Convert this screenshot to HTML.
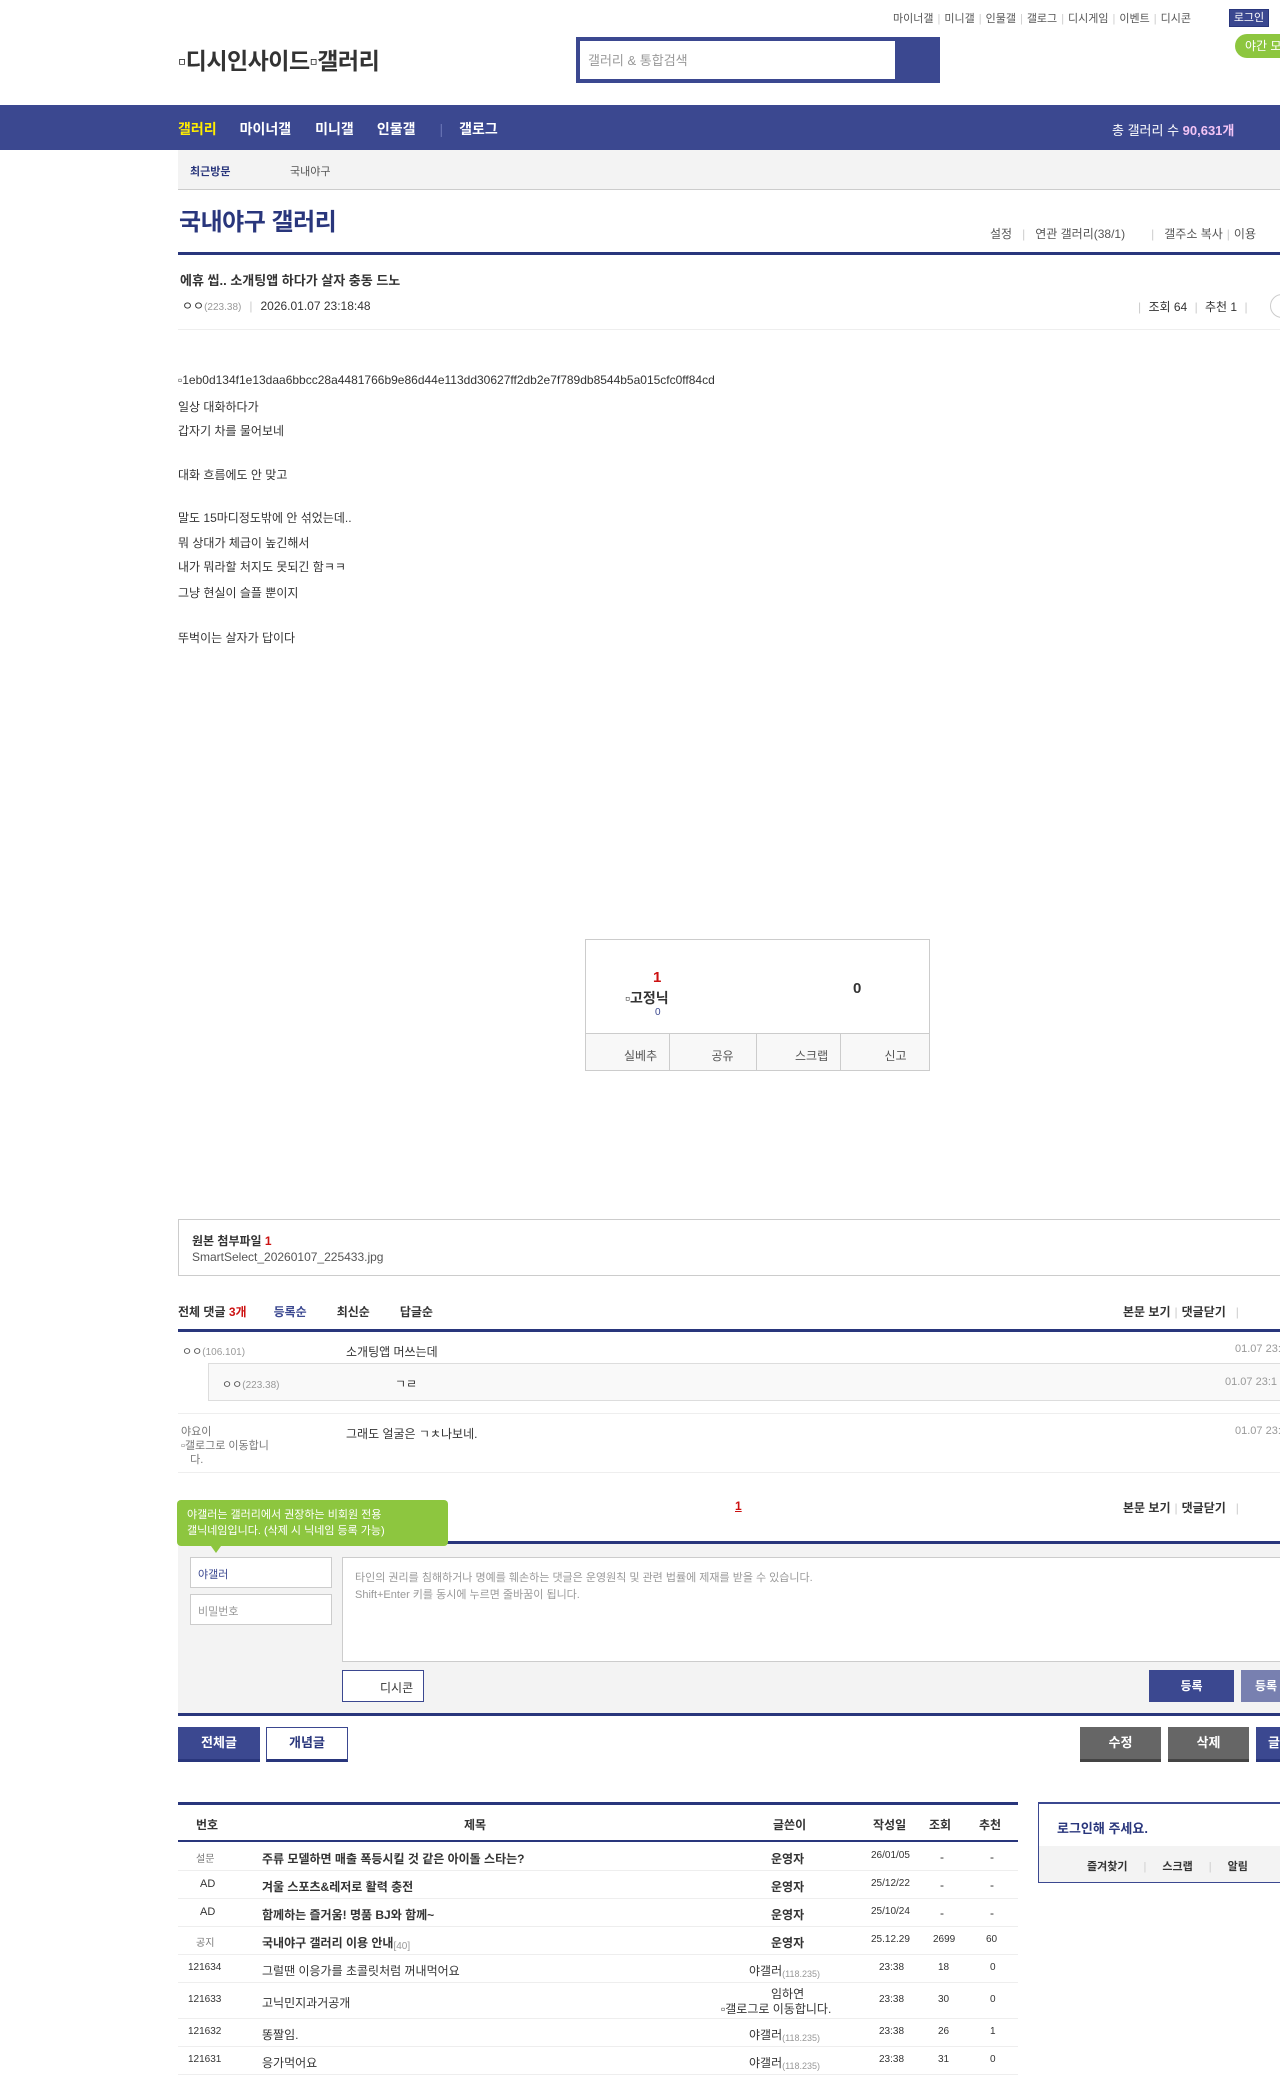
<!DOCTYPE html>
<html><head><meta charset="utf-8"><style>
*{margin:0;padding:0;box-sizing:border-box}
body{width:1280px;height:2079px;position:relative;overflow:hidden;background:#fff;font-family:"Liberation Sans","Noto Sans CJK KR",sans-serif;font-size:12px;color:#333}
.a{position:absolute;white-space:nowrap}
.b{font-weight:bold}
.sep{color:#ccc;margin:0 4px}
.hl{position:absolute;height:1px;background:#eee}
.bl{position:absolute;height:3px;background:#29367c}
.tr{position:absolute;left:178px;width:840px;height:28px;border-bottom:1px solid #eee;font-size:12px}
.tr span{position:absolute;top:7px;white-space:nowrap}
.c{position:absolute;left:178px;font-size:12px;color:#333;white-space:nowrap}
</style></head><body>
<!-- top links -->
<div class="a" style="left:893px;top:10px;font-size:11px;color:#555">마이너갤<span class="sep">|</span>미니갤<span class="sep">|</span>인물갤<span class="sep">|</span>갤로그<span class="sep">|</span>디시게임<span class="sep">|</span>이벤트<span class="sep">|</span>디시콘</div>
<div class="a" style="left:1229px;top:9px;width:40px;height:18px;background:#3b4890;border:1px solid #29367c;color:#fff;font-size:11px;text-align:center;line-height:16px">로그인</div>
<div class="a" style="left:1235px;top:34px;width:60px;height:24px;background:#8dc63f;border-radius:12px;color:#fff;font-size:12px;line-height:24px;padding-left:10px">야간 모드</div>
<!-- logo -->
<div class="a" style="left:178px;top:42px;font-size:23px;font-weight:bold;color:#333;letter-spacing:-0.5px">▫디시인사이드▫갤러리</div>
<!-- search -->
<div class="a" style="left:576px;top:37px;width:364px;height:46px;background:#3b4890"></div>
<div class="a" style="left:580px;top:41px;width:315px;height:38px;background:#fff;color:#999;font-size:13px;padding:9px 8px">갤러리 &amp; 통합검색</div>
<!-- nav -->
<div class="a" style="left:0;top:105px;width:1280px;height:45px;background:#3b4890"></div>
<div class="a b" style="left:178px;top:119px;font-size:14px;color:#fff"><span style="color:#ffed00">갤러리</span><span style="margin-left:23px">마이너갤</span><span style="margin-left:24px">미니갤</span><span style="margin-left:23px">인물갤</span><span style="color:#6a75b5;margin:0 16px 0 24px;font-weight:normal">|</span>갤로그</div>
<div class="a" style="left:1112px;top:120px;font-size:13px;color:#fff">총 갤러리 수 <b style="color:#f3c4f5">90,631개</b></div>
<!-- sub bar -->
<div class="a" style="left:178px;top:150px;width:1102px;height:40px;background:#f3f3f3;border-bottom:1px solid #ccc"></div>
<div class="a b" style="left:190px;top:163px;font-size:11px;color:#29367c">최근방문</div>
<div class="a" style="left:290px;top:163px;font-size:11px;color:#555">국내야구</div>
<!-- title -->
<div class="a b" style="left:179px;top:202px;font-size:24px;color:#29367c;letter-spacing:-0.5px">국내야구 갤러리</div>
<div class="a" style="left:990px;top:225px;font-size:12px;color:#555">설정<span class="sep" style="margin:0 10px">|</span>연관 갤러리(38/1)<span class="sep" style="margin:0 10px 0 26px">|</span>갤주소 복사<span class="sep">|</span>이용</div>
<div class="bl" style="left:178px;top:252px;width:1102px;height:3px"></div>
<!-- post head -->
<div class="a b" style="left:180px;top:270px;font-size:13px;color:#333">에휴 씹.. 소개팅앱 하다가 살자 충동 드노</div>
<div class="a" style="left:182px;top:297px;font-size:12px;color:#333">ㅇㅇ<span style="color:#999;font-size:10px">(223.38)</span><span class="sep" style="margin:0 8px">|</span>2026.01.07 23:18:48</div>
<div class="a" style="left:1134px;top:298px;font-size:12px;color:#333"><span class="sep">|</span> 조회 64 <span class="sep">|</span> 추천 1 <span class="sep">|</span></div>
<div class="a" style="left:1270px;top:294px;width:24px;height:24px;border:1px solid #ccc;border-radius:12px"></div>
<div class="hl" style="left:178px;top:329px;width:1102px"></div>
<!-- content -->
<div class="c" style="top:373px">▫1eb0d134f1e13daa6bbcc28a4481766b9e86d44e113dd30627ff2db2e7f789db8544b5a015cfc0ff84cd</div>
<div class="c" style="top:398px">일상 대화하다가</div>
<div class="c" style="top:422px">갑자기 차를 물어보네</div>
<div class="c" style="top:466px">대화 흐름에도 안 맞고</div>
<div class="c" style="top:509px">말도 15마디정도밖에 안 섞었는데..</div>
<div class="c" style="top:534px">뭐 상대가 체급이 높긴해서</div>
<div class="c" style="top:558px">내가 뭐라할 처지도 못되긴 함ㅋㅋ</div>
<div class="c" style="top:584px">그냥 현실이 슬플 뿐이지</div>
<div class="c" style="top:629px">뚜벅이는 살자가 답이다</div>
<!-- recommend box -->
<div class="a" style="left:585px;top:939px;width:345px;height:132px;border:1px solid #ccc"></div>
<div class="a b" style="left:653px;top:969px;font-size:15px;color:#c11">1</div>
<div class="a b" style="left:625px;top:988px;font-size:14px;color:#333">▫고정닉</div>
<div class="a" style="left:655px;top:1007px;font-size:10px;color:#3b4890">0</div>
<div class="a b" style="left:853px;top:980px;font-size:15px;color:#333">0</div>
<div class="a" style="left:586px;top:1033px;width:343px;height:37px;background:#f8f8f8;border-top:1px solid #ccc;display:flex;font-size:12px;color:#555">
<div style="flex:1;border-right:1px solid #ccc;padding:13px 0 0 38px">실베추</div><div style="flex:1;border-right:1px solid #ccc;padding:13px 0 0 42px">공유</div><div style="flex:1;border-right:1px solid #ccc;padding:13px 0 0 38px">스크랩</div><div style="flex:1;padding:13px 0 0 44px">신고</div></div>
<!-- attach -->
<div class="a" style="left:178px;top:1219px;width:1110px;height:57px;border:1px solid #ccc"></div>
<div class="a b" style="left:192px;top:1232px;font-size:12px;color:#333">원본 첨부파일 <span style="color:#c11">1</span></div>
<div class="a" style="left:192px;top:1250px;font-size:12px;color:#555">SmartSelect_20260107_225433.jpg</div>
<!-- comments -->
<div class="a b" style="left:178px;top:1303px;font-size:12px;color:#333">전체 댓글 <span style="color:#c11">3개</span><span style="color:#3b4890;margin-left:27px">등록순</span><span style="margin-left:30px">최신순</span><span style="margin-left:30px">답글순</span></div>
<div class="a b" style="left:1123px;top:1303px;font-size:12px;color:#333">본문 보기<span class="sep" style="font-weight:normal">|</span>댓글닫기<span class="sep" style="font-weight:normal;margin-left:10px">|</span></div>
<div class="bl" style="left:178px;top:1329px;width:1102px"></div>
<div class="a" style="left:182px;top:1343px;font-size:11px;color:#555">ㅇㅇ<span style="color:#999;font-size:10px">(106.101)</span></div>
<div class="a" style="left:346px;top:1343px;font-size:12px;color:#333">소개팅앱 머쓰는데</div>
<div class="a" style="left:1235px;top:1343px;font-size:11px;color:#999">01.07 23:</div>
<div class="a" style="left:208px;top:1363px;width:1080px;height:38px;background:#f9f9f9;border:1px solid #ddd"></div>
<div class="a" style="left:222px;top:1376px;font-size:11px;color:#555">ㅇㅇ<span style="color:#999;font-size:10px">(223.38)</span></div>
<div class="a" style="left:395px;top:1375px;font-size:12px;color:#333">ㄱㄹ</div>
<div class="a" style="left:1225px;top:1376px;font-size:11px;color:#999">01.07 23:1</div>
<div class="hl" style="left:178px;top:1413px;width:1102px"></div>
<div class="a" style="left:181px;top:1425px;font-size:11px;color:#777;line-height:14px">야요이<br>▫갤로그로 이동합니<br>&nbsp;&nbsp;&nbsp;다.</div>
<div class="a" style="left:346px;top:1425px;font-size:12px;color:#333">그래도 얼굴은 ㄱㅊ나보네.</div>
<div class="a" style="left:1235px;top:1425px;font-size:11px;color:#999">01.07 23:</div>
<div class="hl" style="left:178px;top:1472px;width:1102px"></div>
<div class="a b" style="left:735px;top:1499px;font-size:12px;color:#c11;text-decoration:underline">1</div>
<div class="a b" style="left:1123px;top:1499px;font-size:12px;color:#333">본문 보기<span class="sep" style="font-weight:normal">|</span>댓글닫기<span class="sep" style="font-weight:normal;margin-left:10px">|</span></div>
<div class="bl" style="left:178px;top:1541px;width:1102px"></div>
<div class="a" style="left:178px;top:1544px;width:1102px;height:170px;background:#f3f3f3"></div>
<div class="a" style="left:177px;top:1500px;width:271px;height:46px;background:#8dc63f;border-radius:4px;color:#fff;font-size:11px;line-height:16px;padding:7px 10px">야갤러는 갤러리에서 권장하는 비회원 전용<br>갤닉네임입니다. (삭제 시 닉네임 등록 가능)</div>
<div class="a" style="left:211px;top:1546px;width:0;height:0;border-left:5px solid transparent;border-right:5px solid transparent;border-top:7px solid #8dc63f"></div>
<div class="a" style="left:190px;top:1557px;width:142px;height:31px;background:#fff;border:1px solid #ccc;font-size:11px;color:#3b4890;padding:8px 7px">야갤러</div>
<div class="a" style="left:190px;top:1594px;width:142px;height:31px;background:#fff;border:1px solid #ccc;font-size:11px;color:#999;padding:8px 7px">비밀번호</div>
<div class="a" style="left:342px;top:1557px;width:950px;height:105px;background:#fff;border:1px solid #ccc;font-size:11px;color:#999;padding:12px 12px;line-height:17px">타인의 권리를 침해하거나 명예를 훼손하는 댓글은 운영원칙 및 관련 법률에 제재를 받을 수 있습니다.<br>Shift+Enter 키를 동시에 누르면 줄바꿈이 됩니다.</div>
<div class="a" style="left:342px;top:1670px;width:82px;height:32px;background:#fff;border:1px solid #3b4890;font-size:12px;color:#333;padding:8px 0 0 37px">디시콘</div>
<div class="a b" style="left:1149px;top:1670px;width:85px;height:32px;background:#3b4890;color:#fff;font-size:12px;text-align:center;line-height:32px">등록</div>
<div class="a b" style="left:1241px;top:1670px;width:60px;height:32px;background:#7880b0;color:#fff;font-size:12px;line-height:32px;padding-left:14px">등록</div>
<div class="bl" style="left:178px;top:1713px;width:1102px"></div>
<!-- buttons -->
<div class="a b" style="left:178px;top:1727px;width:82px;height:35px;background:#3b4890;border-bottom:3px solid #29367c;color:#fff;font-size:13px;text-align:center;line-height:32px">전체글</div>
<div class="a b" style="left:266px;top:1727px;width:82px;height:35px;background:#fff;border:1px solid #3b4890;border-bottom:3px solid #29367c;color:#29367c;font-size:13px;text-align:center;line-height:30px">개념글</div>
<div class="a b" style="left:1080px;top:1727px;width:81px;height:35px;background:#666;border-bottom:3px solid #444;color:#fff;font-size:13px;text-align:center;line-height:32px">수정</div>
<div class="a b" style="left:1168px;top:1727px;width:81px;height:35px;background:#666;border-bottom:3px solid #444;color:#fff;font-size:13px;text-align:center;line-height:32px">삭제</div>
<div class="a b" style="left:1256px;top:1727px;width:40px;height:35px;background:#3b4890;border-bottom:3px solid #29367c;color:#fff;font-size:13px;line-height:32px;padding-left:12px">글</div>
<!-- list -->
<div class="bl" style="left:178px;top:1802px;width:840px"></div>
<div class="a b" style="top:1816px;left:196px;font-size:12px;color:#333">번호</div>
<div class="a b" style="top:1816px;left:464px;font-size:12px;color:#333">제목</div>
<div class="a b" style="top:1816px;left:773px;font-size:12px;color:#333">글쓴이</div>
<div class="a b" style="top:1816px;left:873px;font-size:12px;color:#333">작성일</div>
<div class="a b" style="top:1816px;left:929px;font-size:12px;color:#333">조회</div>
<div class="a b" style="top:1816px;left:979px;font-size:12px;color:#333">추천</div>
<div class="a" style="left:178px;top:1840px;width:840px;height:2px;background:#29367c"></div>
<div class="tr" style="top:1843px"><span style="left:18px;color:#777;font-size:10px">설문</span><span class="b" style="left:84px">주류 모델하면 매출 폭등시킬 것 같은 아이돌 스타는?</span><span class="b" style="left:593px">운영자</span><span style="left:693px;font-size:10px">26/01/05</span><span style="left:762px">-</span><span style="left:812px">-</span></div>
<div class="tr" style="top:1871px"><span style="left:22px;font-size:11px">AD</span><span class="b" style="left:84px">겨울 스포츠&amp;레저로 활력 충전</span><span class="b" style="left:593px">운영자</span><span style="left:693px;font-size:10px">25/12/22</span><span style="left:762px">-</span><span style="left:812px">-</span></div>
<div class="tr" style="top:1899px"><span style="left:22px;font-size:11px">AD</span><span class="b" style="left:84px">함께하는 즐거움! 명품 BJ와 함께~</span><span class="b" style="left:593px">운영자</span><span style="left:693px;font-size:10px">25/10/24</span><span style="left:762px">-</span><span style="left:812px">-</span></div>
<div class="tr" style="top:1927px"><span style="left:18px;color:#777;font-size:10px">공지</span><span class="b" style="left:84px">국내야구 갤러리 이용 안내 <span style="font-weight:normal;color:#999;font-size:10px">[40]</span></span><span class="b" style="left:593px">운영자</span><span style="left:693px;font-size:10px">25.12.29</span><span style="left:755px;font-size:10px">2699</span><span style="left:808px;font-size:10px">60</span></div>
<div class="tr" style="top:1955px"><span style="left:10px;font-size:10px">121634</span><span style="left:84px">그럴땐 이응가를 초콜릿처럼 꺼내먹어요</span><span style="left:571px">야갤러 <span style="color:#999;font-size:9px">(118.235)</span></span><span style="left:701px;font-size:10px">23:38</span><span style="left:760px;font-size:10px">18</span><span style="left:812px;font-size:10px">0</span></div>
<div class="tr" style="top:1983px;height:36px"><span style="left:10px;top:11px;font-size:10px">121633</span><span style="left:84px;top:11px">고닉민지과거공개</span><span style="left:593px;top:2px">임하연</span><span style="left:543px;top:17px">▫갤로그로 이동합니다.</span><span style="left:701px;top:11px;font-size:10px">23:38</span><span style="left:760px;top:11px;font-size:10px">30</span><span style="left:812px;top:11px;font-size:10px">0</span></div>
<div class="tr" style="top:2019px"><span style="left:10px;font-size:10px">121632</span><span style="left:84px">똥짤임.</span><span style="left:571px">야갤러 <span style="color:#999;font-size:9px">(118.235)</span></span><span style="left:701px;font-size:10px">23:38</span><span style="left:760px;font-size:10px">26</span><span style="left:812px;font-size:10px">1</span></div>
<div class="tr" style="top:2047px"><span style="left:10px;font-size:10px">121631</span><span style="left:84px">응가먹어요</span><span style="left:571px">야갤러 <span style="color:#999;font-size:9px">(118.235)</span></span><span style="left:701px;font-size:10px">23:38</span><span style="left:760px;font-size:10px">31</span><span style="left:812px;font-size:10px">0</span></div>
<!-- login box -->
<div class="a" style="left:1038px;top:1802px;width:260px;height:81px;border:1px solid #3b4890;border-top:2px solid #3b4890"></div>
<div class="a b" style="left:1057px;top:1818px;font-size:13px;color:#29367c">로그인해 주세요.</div>
<div class="a" style="left:1039px;top:1846px;width:260px;height:36px;background:#f3f3f3"></div>
<div class="a b" style="left:1087px;top:1858px;font-size:11px;color:#333">즐겨찾기<span class="sep" style="font-weight:normal;margin:0 16px">|</span>스크랩<span class="sep" style="font-weight:normal;margin:0 16px">|</span>알림</div>
</body></html>
